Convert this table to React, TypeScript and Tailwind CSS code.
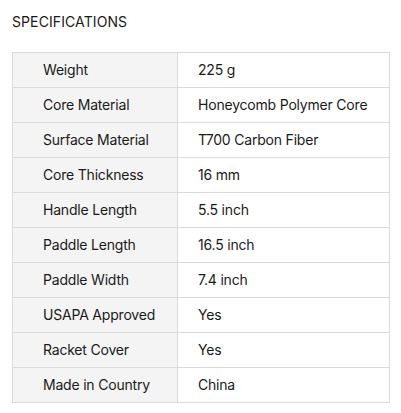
import React from "react";

const specs: [string, string][] = [
  ["Weight", "225 g"],
  ["Core Material", "Honeycomb Polymer Core"],
  ["Surface Material", "T700 Carbon Fiber"],
  ["Core Thickness", "16 mm"],
  ["Handle Length", "5.5 inch"],
  ["Paddle Length", "16.5 inch"],
  ["Paddle Width", "7.4 inch"],
  ["USAPA Approved", "Yes"],
  ["Racket Cover", "Yes"],
  ["Made in Country", "China"],
];

export default function App() {
  return (
    <div
      className="w-[401px] h-[413px] bg-white px-3 pt-[12px] text-[#1a1a1a]"
      style={{ fontFamily: "Inter, 'Liberation Sans', sans-serif" }}
    >
      <h2 className="text-[14px] leading-5 font-normal tracking-[0.1px]">SPECIFICATIONS</h2>
      <table className="mt-[20px] w-[378px] border-collapse text-[14px] tracking-[-0.2px]">
        <tbody>
          {specs.map(([label, value]) => (
            <tr key={label} className="h-[35px]">
              <td className="w-[165px] border border-[#dadada] bg-[#f4f4f4] pl-[30px] pb-[2px] align-middle">
                {label}
              </td>
              <td className="border border-[#dadada] pl-[20px] pb-[2px] align-middle">{value}</td>
            </tr>
          ))}
        </tbody>
      </table>
    </div>
  );
}
